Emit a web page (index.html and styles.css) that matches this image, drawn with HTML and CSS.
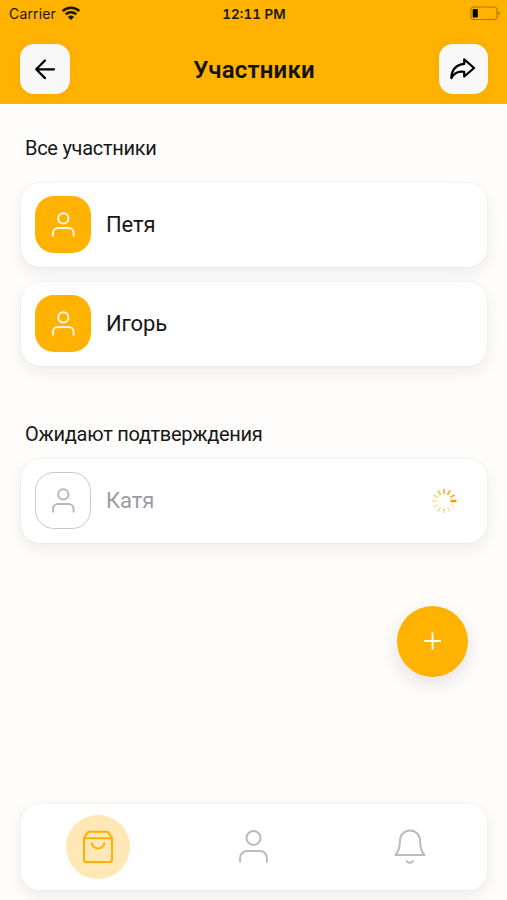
FILE: index.html
```html
<!DOCTYPE html>
<html lang="ru">
<head>
<meta charset="utf-8">
<meta name="viewport" content="width=device-width, initial-scale=1">
<title>Участники</title>
<link rel="stylesheet" href="styles.css">
</head>
<body>
<svg width="0" height="0" class="symbols" aria-hidden="true">
  <symbol id="user" viewBox="0 0 28 28">
    <circle cx="14.3" cy="7.4" r="5.1"/>
    <path d="M4 25.6v-3.500a5 5 0 0 1 5-5h10.600a5 5 0 0 1 5 5v3.500"/>
  </symbol>
</svg>
<div class="app">
  <header class="header">
    <div class="status">
      <div class="carrier">
        <span>Carrier</span>
        <svg class="wifi" width="20" height="15" viewBox="0 0 20 15">
          <path d="M1.700 5.100a12 12 0 0 1 16.600 0M4.700 8.300a7.700 7.700 0 0 1 10.600 0"/>
          <path class="wifi-dot" d="M6.900 10.900a4.700 4.700 0 0 1 6.200 0L10 14z"/>
        </svg>
      </div>
      <span class="time">12:11 PM</span>
      <svg class="battery" width="31" height="15" viewBox="0 0 31 15">
        <rect class="battery-case" x=".9" y="1" width="26.200" height="12.500" rx="3.300"/>
        <rect x="2.700" y="2.900" width="5.100" height="8.700" rx="1.300"/>
        <path class="battery-cap" d="M28.500 5.200c2 .9 2 3.200 0 4.100z"/>
      </svg>
    </div>
    <div class="toolbar">
      <button class="tool" aria-label="Назад">
        <svg width="26" height="26" viewBox="0 0 26 26"><path d="M22 13.300H4.200M13 4.500l-8.800 8.800 8.800 8.800"/></svg>
      </button>
      <h1>Участники</h1>
      <button class="tool" aria-label="Поделиться">
        <svg width="30" height="26" viewBox="0 0 30 26"><path d="M16.200 3.300l9.900 8.700-9.900 8.500v-4.700C10.500 14.800 6 17.200 3.300 22.100 3.700 13.300 8.800 8.700 16.200 7.900z"/></svg>
      </button>
    </div>
  </header>

  <main class="content">
    <h2>Все участники</h2>
    <ul class="list">
      <li class="card"><span class="avatar"><svg width="28" height="28"><use href="#user"/></svg></span><span class="name">Петя</span></li>
      <li class="card"><span class="avatar"><svg width="28" height="28"><use href="#user"/></svg></span><span class="name">Игорь</span></li>
    </ul>
    <h2 class="pending-title">Ожидают подтверждения</h2>
    <ul class="list">
      <li class="card pending">
        <span class="avatar"><svg width="28" height="28"><use href="#user"/></svg></span><span class="name">Катя</span>
        <svg class="spinner" width="26" height="26" viewBox="-13 -13 26 26">
          <path d="M6.500 0H12.500" class="lead"/>
          <path d="M7 0H12.300" transform="rotate(-30)" opacity=".95"/>
          <path d="M7 0H12.300" transform="rotate(-60)" opacity=".9"/>
          <path d="M7 0H12.300" transform="rotate(-90)" opacity=".8"/>
          <path d="M7 0H12.300" transform="rotate(-120)" opacity=".68"/>
          <path d="M7 0H12.300" transform="rotate(-150)" opacity=".5"/>
          <path d="M7 0H12.300" transform="rotate(180)" opacity=".32"/>
          <path d="M7 0H12.300" transform="rotate(150)" opacity=".3"/>
          <path d="M7 0H12.300" transform="rotate(120)" opacity=".4"/>
          <path d="M7 0H12.300" transform="rotate(90)" opacity=".4"/>
          <path d="M7 0H12.300" transform="rotate(60)" opacity=".3"/>
          <path d="M7 0H12.300" transform="rotate(30)" opacity=".22"/>
        </svg>
      </li>
    </ul>
    <button class="add" aria-label="Добавить">
      <svg width="20" height="20" viewBox="0 0 20 20"><path d="M9.500 1.600v16.800M1.100 10h16.800"/></svg>
    </button>
  </main>

  <nav class="tabs">
    <a class="tab active"><svg width="34" height="36" viewBox="0 0 34 36"><path d="M3 8.700 7.200 2.700h19.600L31 8.700v21.700a2.600 2.600 0 0 1-2.600 2.600H5.600A2.600 2.600 0 0 1 3 30.400zM3 9.200h28M10.700 14.300a6.400 6.400 0 0 0 12.600 0"/></svg></a>
    <a class="tab"><svg width="34" height="36" viewBox="0 0 34 36"><circle cx="17.500" cy="8.900" r="7"/><path d="M4.100 32.700v-3.700a7 7 0 0 1 7-7h12.800a7 7 0 0 1 7 7v3.700"/></svg></a>
    <a class="tab"><svg width="34" height="38" viewBox="0 0 34 38"><path d="M3.400 27.100c3.100-3.700 4.500-8 4.500-13.300 0-7 4.200-11.300 10.100-11.300s10.100 4.300 10.100 11.300c0 5.300 1.200 9.600 4.400 13.300zM14.900 33.200c1.200 2 5 2 6.200 0"/></svg></a>
  </nav>
</div>
</body>
</html>
```

FILE: styles.css
```css
* { box-sizing: border-box; }
body { margin: 0; font-family: Roboto, "Liberation Sans", sans-serif; color: #171717; background: #fefdfb; }
h1, h2, ul { margin: 0; padding: 0; }
button { padding: 0; border: 0; }
svg { display: block; fill: none; stroke: currentColor; stroke-linecap: round; stroke-linejoin: round; }
.symbols { position: absolute; }
.app { height: 900px; display: flex; flex-direction: column; overflow: hidden; }

.header { height: 103.500px; background: #ffb300; flex: none; }
.status { height: 28px; padding: 0 6px 0 9px; display: grid; grid-template-columns: 1fr auto 1fr; align-items: center; font: 14px/28px Inter, sans-serif; color: #1c1500; }
.carrier { display: flex; align-items: center; gap: 5px; letter-spacing: .15px; }
.carrier .wifi { margin-top: -2px; stroke-width: 2.500; stroke-linecap: butt; }
.wifi-dot { fill: currentColor; stroke: none; }
.time { font-weight: 600; font-size: 13.500px; font-variant-numeric: tabular-nums; letter-spacing: 0; margin-right: 2px; }
.battery { justify-self: end; margin-top: -2px; fill: #000; stroke: none; }
.battery-case { fill: none; stroke: #a87808; stroke-width: 1.100; }
.battery-cap { fill: #a87808; }
.toolbar { height: 50px; margin: 16px 19px 0 20px; display: flex; align-items: center; justify-content: space-between; }
.tool { width: 49.500px; height: 49.500px; border-radius: 14px; background: #f8f8f8; color: #000; display: grid; place-items: center; box-shadow: 0 1px 8px rgba(120, 80, 0, .08); }
.tool svg { stroke-width: 2.200; }
h1 { font-size: 24px; line-height: 30px; padding-top: 2px; font-weight: 600; color: #161000; letter-spacing: .2px; }

.content { flex: 1; display: flex; flex-direction: column; padding: 31px 20px 0 20.500px; }
h2 { font-size: 20px; line-height: 26px; font-weight: 400; padding-left: 4.500px; letter-spacing: -.28px; }
.list { list-style: none; display: flex; flex-direction: column; gap: 15px; margin-top: 22px; }
.card { height: 84px; padding: 0 30px 0 14px; border-radius: 19px; background: #fff; display: flex; align-items: center; box-shadow: 0 6px 16px rgba(30, 30, 50, .07), 0 0 2px rgba(0, 0, 0, .09); }
.avatar { width: 56.500px; height: 56.500px; border-radius: 19px; background: #ffb300; color: #fff8e8; display: grid; place-items: center; }
.avatar svg { stroke-linecap: butt; stroke-width: 2; }
.name { margin-left: 15px; font-size: 22px; line-height: 28px; letter-spacing: -.1px; }
.pending-title { margin-top: 55px; }
.pending-title + .list { margin-top: 12px; }
.pending .avatar { background: none; border: 1.500px solid #c9c9cb; color: #b8b8ba; }
.pending .name { color: #9b9ca2; }
.spinner { margin-left: auto; color: #f2b21b; stroke-width: 2; stroke-linecap: butt; }
.lead { stroke: #e5a20b; stroke-width: 2.600; }
.add { width: 71px; height: 71px; margin: 63px 19px 0 auto; border-radius: 50%; background: #ffb300; color: #fff; display: grid; place-items: center; box-shadow: 0 6px 18px rgba(40, 30, 40, .13); }
.add svg { stroke-width: 1.900; stroke-linecap: butt; }

.tabs { height: 86px; flex: none; margin: 0 20.500px 10.500px; border-radius: 18px; background: #fff; display: grid; grid-template-columns: repeat(3, 1fr); place-items: center; box-shadow: 0 5px 16px rgba(30, 30, 50, .08), 0 0 2px rgba(0, 0, 0, .06); }
.tab { width: 64px; height: 64px; border-radius: 50%; display: grid; place-items: center; color: #bbb; }
.tab svg { stroke-width: 2; }
.active { background: #ffe8b5; color: #ffb000; }
```
